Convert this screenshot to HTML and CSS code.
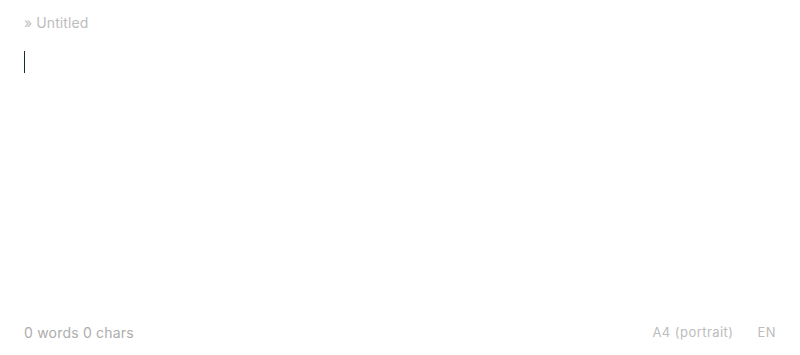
FILE: index.html
```html
<!DOCTYPE html>
<html lang="en">
<head>
<meta charset="utf-8">
<title>Untitled</title>
<link rel="stylesheet" href="styles.css">
</head>
<body>
<div class="app">
  <header class="title">» Untitled</header>
  <main class="editor">
    <span class="caret"></span>
  </main>
  <footer class="status">
    <span class="counts">0 words 0 chars</span>
    <div class="meta">
      <span class="paper">A4 (portrait)</span>
      <span class="lang">EN</span>
    </div>
  </footer>
</div>
</body>
</html>
```
FILE: styles.css
```css
html, body {
  margin: 0;
  padding: 0;
  background: #ffffff;
  height: 100%;
}
body {
  font-family: Inter, "Noto Sans", sans-serif;
}
.app {
  box-sizing: border-box;
  height: 355px;
  display: flex;
  flex-direction: column;
  padding: 13px 24px 13px 24px;
}
.title {
  font-size: 14px;
  line-height: 20px;
  letter-spacing: 0.1px;
  color: #bdbdbd;
}
.editor {
  flex: 1;
  padding-top: 18px;
}
.caret {
  display: block;
  width: 1px;
  height: 22px;
  background: #1b2a33;
}
.status {
  display: flex;
  justify-content: space-between;
  align-items: center;
  height: 20px;
}
.counts {
  font-size: 14px;
  letter-spacing: 0.2px;
  color: #adadad;
}
.meta {
  display: flex;
  gap: 24px;
  font-size: 13px;
  letter-spacing: 0.45px;
  color: #bcbcbc;
}
```
